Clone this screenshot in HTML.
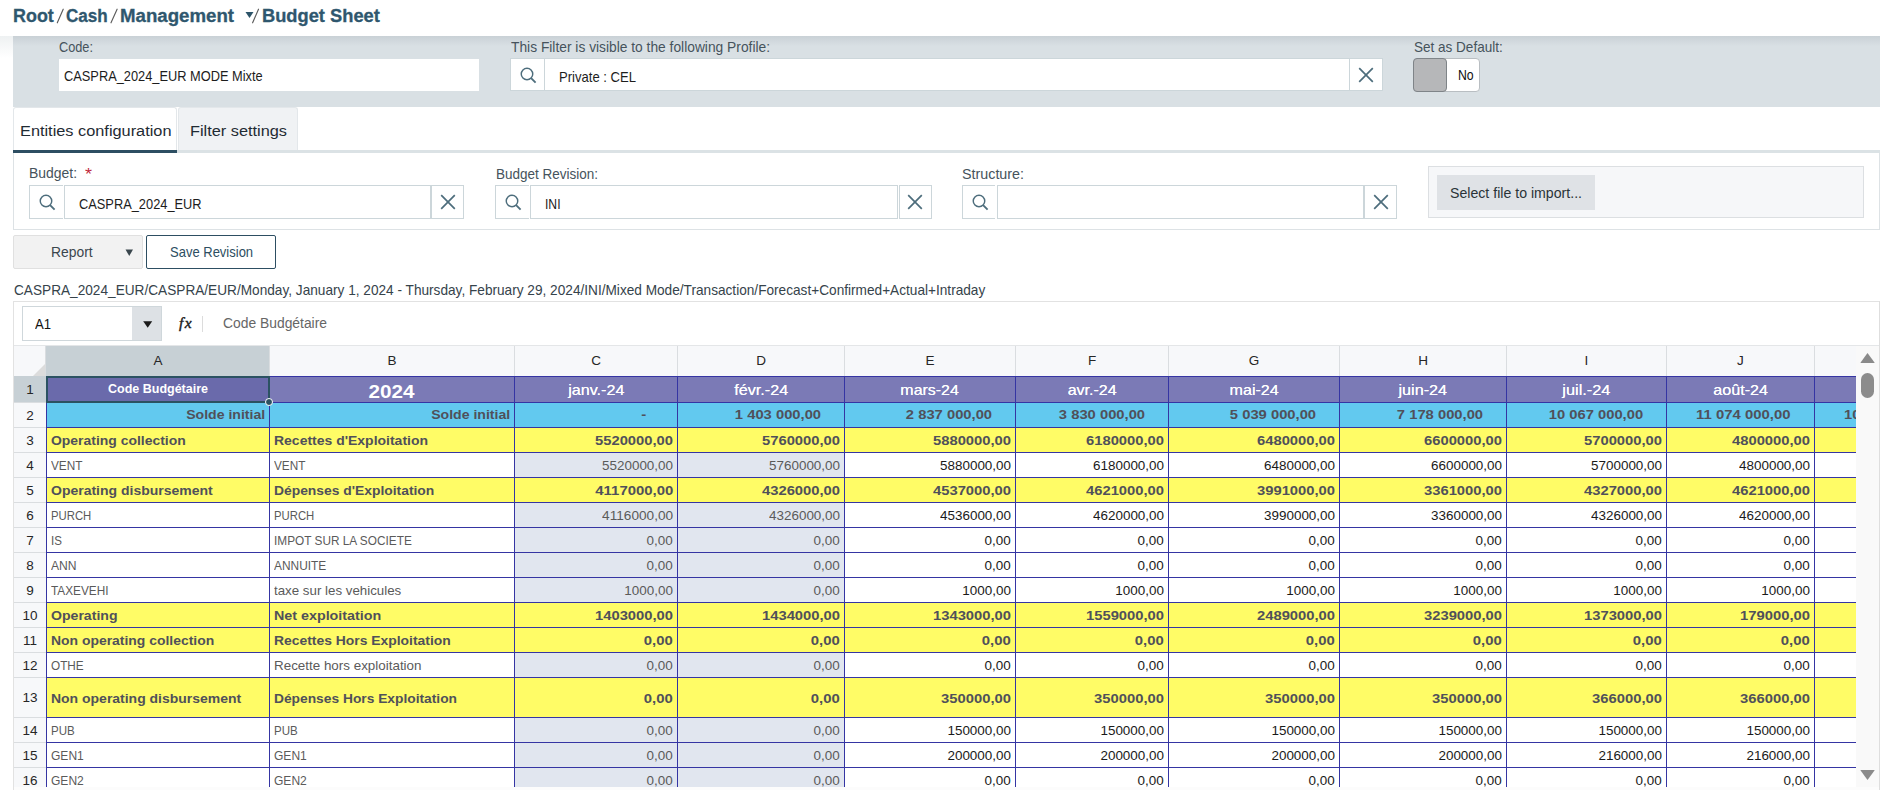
<!DOCTYPE html>
<html><head><meta charset="utf-8"><style>
html,body{margin:0;padding:0;width:1887px;height:790px;overflow:hidden;background:#fff;}
body{position:relative;font-family:"Liberation Sans",sans-serif;}
.a{position:absolute;}
.t{white-space:nowrap;}
</style></head><body>
<div class="a t" style="left:13.20px;top:6.50px;font-size:18px;line-height:18px;color:#2f576e;font-weight:bold;transform:scaleX(0.9955);transform-origin:left;-webkit-text-stroke:0.3px #2f576e;">Root</div>
<div class="a t" style="left:66.20px;top:6.50px;font-size:18px;line-height:18px;color:#2f576e;font-weight:bold;transform:scaleX(0.9497);transform-origin:left;-webkit-text-stroke:0.3px #2f576e;">Cash</div>
<div class="a t" style="left:120.20px;top:6.50px;font-size:18px;line-height:18px;color:#2f576e;font-weight:bold;transform:scaleX(1.0362);transform-origin:left;-webkit-text-stroke:0.3px #2f576e;">Management</div>
<div class="a t" style="left:261.60px;top:6.50px;font-size:18px;line-height:18px;color:#2f576e;font-weight:bold;transform:scaleX(1.0154);transform-origin:left;-webkit-text-stroke:0.3px #2f576e;">Budget Sheet</div>
<svg class="a" style="left:0;top:0" width="300" height="30"><path d="M57.3 22.8 L63.2 9.2" stroke="#5c5c5c" stroke-width="1.15" stroke-linecap="round"/></svg>
<svg class="a" style="left:0;top:0" width="300" height="30"><path d="M111.0 22.8 L117.1 9.2" stroke="#5c5c5c" stroke-width="1.15" stroke-linecap="round"/></svg>
<svg class="a" style="left:0;top:0" width="300" height="30"><path d="M252.6 22.8 L258.5 9.2" stroke="#5c5c5c" stroke-width="1.15" stroke-linecap="round"/></svg>
<svg class="a" style="left:245px;top:11px" width="9" height="9"><path d="M0.5 1 L8.5 1 L4.5 7 Z" fill="#2d5469"/></svg>
<div class="a" style="left:13px;top:36px;width:1867px;height:71px;background:linear-gradient(#c9d1d6 0px,#d9e0e4 10px,#d9e0e4 100%)"></div>
<div class="a" style="left:0px;top:36px;width:13px;height:22px;background:linear-gradient(#eef1f2 0px,#ffffff 22px)"></div>
<div class="a t" style="left:59.00px;top:39.78px;font-size:14.5px;line-height:14.5px;color:#46535c;transform:scaleX(0.8787);transform-origin:left;">Code:</div>
<div class="a" style="left:59px;top:59px;width:420px;height:32px;background:#ffffff;"></div>
<div class="a t" style="left:64.40px;top:68.05px;font-size:15px;line-height:15px;color:#1d1d1d;transform:scaleX(0.8543);transform-origin:left;">CASPRA_2024_EUR MODE Mixte</div>
<div class="a t" style="left:510.90px;top:39.88px;font-size:14.5px;line-height:14.5px;color:#46535c;transform:scaleX(0.9509);transform-origin:left;">This Filter is visible to the following Profile:</div>
<div class="a t" style="left:1413.80px;top:40.17px;font-size:14.5px;line-height:14.5px;color:#46535c;transform:scaleX(0.9326);transform-origin:left;">Set as Default:</div>
<div class="a" style="left:510px;top:58px;width:872.5px;height:33px;background:#fff;border:1px solid #ccd6da;box-sizing:border-box;"></div>
<div class="a" style="left:543.5px;top:58px;width:1.0px;height:33px;background:#ccd6da;"></div>
<div class="a" style="left:1348.5px;top:58px;width:1.0px;height:33px;background:#ccd6da;"></div>
<svg class="a" style="left:518.95px;top:65.9px" width="18" height="18" viewBox="0 0 18 18"><circle cx="8" cy="8" r="5.75" fill="none" stroke="#4d6d7c" stroke-width="1.45"/><path d="M12.1 12.1 L16.6 16.6" stroke="#4d6d7c" stroke-width="1.9" stroke-linecap="butt"/></svg>
<svg class="a" style="left:1357.85px;top:66.5px" width="16" height="16" viewBox="0 0 16 16"><path d="M1.2 1.2 L14.8 14.8 M14.8 1.2 L1.2 14.8" stroke="#4d6d7c" stroke-width="1.7"/></svg>
<div class="a t" style="left:559.30px;top:69.45px;font-size:15px;line-height:15px;color:#1d1d1d;transform:scaleX(0.8714);transform-origin:left;">Private : CEL</div>
<div class="a" style="left:1413px;top:58px;width:67px;height:34px;background:#fff;border:1px solid #b9bec2;border-radius:4px;box-sizing:border-box"></div>
<div class="a" style="left:1413px;top:58px;width:34px;height:34px;background:#b6b7b9;border:1px solid #7f8488;border-radius:4px;box-sizing:border-box"></div>
<div class="a t" style="left:1458.00px;top:67.35px;font-size:15px;line-height:15px;color:#111;transform:scaleX(0.8188);transform-origin:left;">No</div>
<div class="a" style="left:13px;top:150px;width:1867px;height:3px;background:#dbe2e5;"></div>
<div class="a" style="left:13px;top:107px;width:163.5px;height:43px;background:#ffffff;border:1px solid #e3e7ea;border-bottom:none;box-sizing:border-box;border-radius:3px 3px 0 0;"></div>
<div class="a" style="left:13px;top:150px;width:163.5px;height:3px;background:#2d4e62;"></div>
<div class="a" style="left:178.4px;top:107px;width:119.20000000000002px;height:43px;background:#f0f2f4;border:1px solid #e3e7ea;border-bottom:none;box-sizing:border-box;border-radius:3px 3px 0 0;"></div>
<div class="a t" style="left:19.50px;top:122.80px;font-size:15.3px;line-height:15.3px;color:#1f2b33;transform:scaleX(1.0666);transform-origin:left;">Entities configuration</div>
<div class="a t" style="left:190.00px;top:122.80px;font-size:15.3px;line-height:15.3px;color:#1f2b33;transform:scaleX(1.0662);transform-origin:left;">Filter settings</div>
<div class="a" style="left:13px;top:153px;width:1867px;height:77px;background:#ffffff;border:1px solid #dde2e5;border-top:none;box-sizing:border-box;"></div>
<div class="a t" style="left:29.40px;top:166.48px;font-size:14.5px;line-height:14.5px;color:#46535c;transform:scaleX(0.9603);transform-origin:left;">Budget:</div>
<div class="a t" style="left:84.50px;top:167.40px;font-size:16px;line-height:16px;color:#c0283c;transform:scaleX(1.1242);transform-origin:left;">*</div>
<div class="a" style="left:29px;top:185px;width:33.5px;height:33.5px;background:#fff;border:1px solid #ccd6da;border-right:none;box-sizing:border-box;"></div>
<div class="a" style="left:64.0px;top:185px;width:367.2px;height:33.5px;background:#fff;border:1px solid #ccd6da;box-sizing:border-box;"></div>
<div class="a" style="left:431.2px;top:185px;width:33.30000000000001px;height:33.5px;background:#fff;border:1px solid #ccd6da;box-sizing:border-box;"></div>
<svg class="a" style="left:37.95px;top:193.15px" width="18" height="18" viewBox="0 0 18 18"><circle cx="8" cy="8" r="5.75" fill="none" stroke="#4d6d7c" stroke-width="1.45"/><path d="M12.1 12.1 L16.6 16.6" stroke="#4d6d7c" stroke-width="1.9" stroke-linecap="butt"/></svg>
<svg class="a" style="left:439.85px;top:193.75px" width="16" height="16" viewBox="0 0 16 16"><path d="M1.2 1.2 L14.8 14.8 M14.8 1.2 L1.2 14.8" stroke="#4d6d7c" stroke-width="1.7"/></svg>
<div class="a t" style="left:78.50px;top:195.65px;font-size:15px;line-height:15px;color:#1d1d1d;transform:scaleX(0.8549);transform-origin:left;">CASPRA_2024_EUR</div>
<div class="a t" style="left:496.20px;top:166.58px;font-size:14.5px;line-height:14.5px;color:#46535c;transform:scaleX(0.9305);transform-origin:left;">Budget Revision:</div>
<div class="a" style="left:495.4px;top:185px;width:33.5px;height:33.5px;background:#fff;border:1px solid #ccd6da;border-right:none;box-sizing:border-box;"></div>
<div class="a" style="left:530.4px;top:185px;width:368.1px;height:33.5px;background:#fff;border:1px solid #ccd6da;box-sizing:border-box;"></div>
<div class="a" style="left:898.5px;top:185px;width:33.299999999999955px;height:33.5px;background:#fff;border:1px solid #ccd6da;box-sizing:border-box;"></div>
<svg class="a" style="left:504.35px;top:193.15px" width="18" height="18" viewBox="0 0 18 18"><circle cx="8" cy="8" r="5.75" fill="none" stroke="#4d6d7c" stroke-width="1.45"/><path d="M12.1 12.1 L16.6 16.6" stroke="#4d6d7c" stroke-width="1.9" stroke-linecap="butt"/></svg>
<svg class="a" style="left:907.15px;top:193.75px" width="16" height="16" viewBox="0 0 16 16"><path d="M1.2 1.2 L14.8 14.8 M14.8 1.2 L1.2 14.8" stroke="#4d6d7c" stroke-width="1.7"/></svg>
<div class="a t" style="left:545.20px;top:196.15px;font-size:15px;line-height:15px;color:#1d1d1d;transform:scaleX(0.8087);transform-origin:left;">INI</div>
<div class="a t" style="left:961.70px;top:166.58px;font-size:14.5px;line-height:14.5px;color:#46535c;transform:scaleX(0.9864);transform-origin:left;">Structure:</div>
<div class="a" style="left:961.8px;top:185px;width:33.5px;height:33.5px;background:#fff;border:1px solid #ccd6da;border-right:none;box-sizing:border-box;"></div>
<div class="a" style="left:996.8px;top:185px;width:367.4000000000001px;height:33.5px;background:#fff;border:1px solid #ccd6da;box-sizing:border-box;"></div>
<div class="a" style="left:1364.2px;top:185px;width:33.299999999999955px;height:33.5px;background:#fff;border:1px solid #ccd6da;box-sizing:border-box;"></div>
<svg class="a" style="left:970.75px;top:193.15px" width="18" height="18" viewBox="0 0 18 18"><circle cx="8" cy="8" r="5.75" fill="none" stroke="#4d6d7c" stroke-width="1.45"/><path d="M12.1 12.1 L16.6 16.6" stroke="#4d6d7c" stroke-width="1.9" stroke-linecap="butt"/></svg>
<svg class="a" style="left:1372.85px;top:193.75px" width="16" height="16" viewBox="0 0 16 16"><path d="M1.2 1.2 L14.8 14.8 M14.8 1.2 L1.2 14.8" stroke="#4d6d7c" stroke-width="1.7"/></svg>
<div class="a" style="left:1428.3px;top:166.2px;width:435.4000000000001px;height:52.10000000000002px;background:#f6f7f9;border:1px solid #dcdfe2;box-sizing:border-box;"></div>
<div class="a" style="left:1437px;top:175px;width:158px;height:35px;background:#dfe2e6;"></div>
<div class="a t" style="left:1450.00px;top:186.08px;font-size:14.5px;line-height:14.5px;color:#2a3338;transform:scaleX(0.9750);transform-origin:left;">Select file to import...</div>
<div class="a" style="left:13.3px;top:235.3px;width:129.3px;height:33.6px;background:#f2f2f2;border:1px solid #e0e0e0;border-radius:2px;box-sizing:border-box"></div>
<div class="a t" style="left:51.00px;top:244.78px;font-size:14.5px;line-height:14.5px;color:#3a464d;transform:scaleX(0.9558);transform-origin:left;">Report</div>
<svg class="a" style="left:125px;top:249px" width="9" height="8"><path d="M0.5 0.6 L8 0.6 L4.25 7 Z" fill="#3a464d"/></svg>
<div class="a" style="left:146.3px;top:235.3px;width:129.4px;height:33.6px;background:#fff;border:1.5px solid #2d4e62;border-radius:2px;box-sizing:border-box"></div>
<div class="a t" style="left:169.50px;top:244.78px;font-size:14.5px;line-height:14.5px;color:#2d4e62;transform:scaleX(0.8966);transform-origin:left;">Save Revision</div>
<div class="a t" style="left:13.50px;top:282.68px;font-size:14.5px;line-height:14.5px;color:#36434b;transform:scaleX(0.9409);transform-origin:left;">CASPRA_2024_EUR/CASPRA/EUR/Monday, January 1, 2024 - Thursday, February 29, 2024/INI/Mixed Mode/Transaction/Forecast+Confirmed+Actual+Intraday</div>
<div class="a" style="left:13px;top:301px;width:1867px;height:499px;background:#ffffff;border:1px solid #e2e2e2;box-sizing:border-box;"></div>
<div class="a" style="left:22.4px;top:306.4px;width:139.2px;height:34.200000000000045px;background:#ffffff;border:1px solid #cfd7db;box-sizing:border-box;"></div>
<div class="a" style="left:132px;top:307.4px;width:28.599999999999994px;height:32.200000000000045px;background:#dde1e5;"></div>
<svg class="a" style="left:142.6px;top:320.6px" width="10" height="8"><path d="M0.2 0.2 L9.2 0.2 L4.7 6.7 Z" fill="#1a1a1a"/></svg>
<div class="a t" style="left:35.00px;top:317.20px;font-size:14px;line-height:14px;color:#111;transform:scaleX(0.9344);transform-origin:left;">A1</div>
<div class="a t" style="left:179px;top:315px;font-family:'Liberation Serif';font-style:italic;font-size:15.5px;line-height:15.5px;color:#1a1a1a;letter-spacing:1.5px;-webkit-text-stroke:0.4px #1a1a1a">fx</div>
<div class="a" style="left:202px;top:316.4px;width:1px;height:15.600000000000023px;background:#dcdcdc;"></div>
<div class="a t" style="left:223.40px;top:316.40px;font-size:14px;line-height:14px;color:#666;transform:scaleX(0.9898);transform-origin:left;">Code Budgétaire</div>
<div class="a" style="left:14px;top:345px;width:1842px;height:31px;background:#f7f8fa;"></div>
<div class="a" style="left:14px;top:376px;width:32px;height:411px;background:#f7f8fa;"></div>
<div class="a" style="left:46px;top:345px;width:223px;height:31px;background:#c7d0d5;"></div>
<div class="a" style="left:14px;top:376px;width:32px;height:26px;background:#c7d0d5;"></div>
<svg class="a" style="left:33px;top:363px" width="13" height="13"><path d="M13 0 L13 13 L0 13 Z" fill="#dcdcdc"/></svg>
<div class="a" style="left:269px;top:345px;width:1px;height:31px;background:#dadde0;"></div>
<div class="a" style="left:514px;top:345px;width:1px;height:31px;background:#dadde0;"></div>
<div class="a" style="left:677px;top:345px;width:1px;height:31px;background:#dadde0;"></div>
<div class="a" style="left:844px;top:345px;width:1px;height:31px;background:#dadde0;"></div>
<div class="a" style="left:1015px;top:345px;width:1px;height:31px;background:#dadde0;"></div>
<div class="a" style="left:1168px;top:345px;width:1px;height:31px;background:#dadde0;"></div>
<div class="a" style="left:1339px;top:345px;width:1px;height:31px;background:#dadde0;"></div>
<div class="a" style="left:1506px;top:345px;width:1px;height:31px;background:#dadde0;"></div>
<div class="a" style="left:1666px;top:345px;width:1px;height:31px;background:#dadde0;"></div>
<div class="a" style="left:1814px;top:345px;width:1px;height:31px;background:#dadde0;"></div>
<div class="a" style="left:1856px;top:345px;width:1px;height:31px;background:#dadde0;"></div>
<div class="a" style="left:14px;top:402px;width:32px;height:1px;background:#dadde0;"></div>
<div class="a" style="left:14px;top:427px;width:32px;height:1px;background:#dadde0;"></div>
<div class="a" style="left:14px;top:452px;width:32px;height:1px;background:#dadde0;"></div>
<div class="a" style="left:14px;top:477px;width:32px;height:1px;background:#dadde0;"></div>
<div class="a" style="left:14px;top:502px;width:32px;height:1px;background:#dadde0;"></div>
<div class="a" style="left:14px;top:527px;width:32px;height:1px;background:#dadde0;"></div>
<div class="a" style="left:14px;top:552px;width:32px;height:1px;background:#dadde0;"></div>
<div class="a" style="left:14px;top:577px;width:32px;height:1px;background:#dadde0;"></div>
<div class="a" style="left:14px;top:602px;width:32px;height:1px;background:#dadde0;"></div>
<div class="a" style="left:14px;top:627px;width:32px;height:1px;background:#dadde0;"></div>
<div class="a" style="left:14px;top:652px;width:32px;height:1px;background:#dadde0;"></div>
<div class="a" style="left:14px;top:677px;width:32px;height:1px;background:#dadde0;"></div>
<div class="a" style="left:14px;top:717px;width:32px;height:1px;background:#dadde0;"></div>
<div class="a" style="left:14px;top:742px;width:32px;height:1px;background:#dadde0;"></div>
<div class="a" style="left:14px;top:767px;width:32px;height:1px;background:#dadde0;"></div>
<div class="a" style="left:14px;top:787px;width:32px;height:1px;background:#dadde0;"></div>
<div class="a" style="left:45px;top:345px;width:1px;height:31px;background:#dadde0;"></div>
<div class="a" style="left:14px;top:345px;width:1865px;height:1px;background:#e4e6e8;"></div>
<div class="a t" style="left:153.50px;top:354.22px;font-size:13.5px;line-height:13.5px;color:#262626;">A</div>
<div class="a t" style="left:387.50px;top:354.22px;font-size:13.5px;line-height:13.5px;color:#262626;">B</div>
<div class="a t" style="left:591.13px;top:354.22px;font-size:13.5px;line-height:13.5px;color:#262626;">C</div>
<div class="a t" style="left:756.13px;top:354.22px;font-size:13.5px;line-height:13.5px;color:#262626;">D</div>
<div class="a t" style="left:925.50px;top:354.22px;font-size:13.5px;line-height:13.5px;color:#262626;">E</div>
<div class="a t" style="left:1087.88px;top:354.22px;font-size:13.5px;line-height:13.5px;color:#262626;">F</div>
<div class="a t" style="left:1248.75px;top:354.22px;font-size:13.5px;line-height:13.5px;color:#262626;">G</div>
<div class="a t" style="left:1418.13px;top:354.22px;font-size:13.5px;line-height:13.5px;color:#262626;">H</div>
<div class="a t" style="left:1584.62px;top:354.22px;font-size:13.5px;line-height:13.5px;color:#262626;">I</div>
<div class="a t" style="left:1737.12px;top:354.22px;font-size:13.5px;line-height:13.5px;color:#262626;">J</div>
<div class="a t" style="left:26.25px;top:382.92px;font-size:13.5px;line-height:13.5px;color:#262626;">1</div>
<div class="a t" style="left:26.25px;top:408.82px;font-size:13.5px;line-height:13.5px;color:#262626;">2</div>
<div class="a t" style="left:26.25px;top:433.82px;font-size:13.5px;line-height:13.5px;color:#262626;">3</div>
<div class="a t" style="left:26.25px;top:458.82px;font-size:13.5px;line-height:13.5px;color:#262626;">4</div>
<div class="a t" style="left:26.25px;top:483.82px;font-size:13.5px;line-height:13.5px;color:#262626;">5</div>
<div class="a t" style="left:26.25px;top:508.82px;font-size:13.5px;line-height:13.5px;color:#262626;">6</div>
<div class="a t" style="left:26.25px;top:533.82px;font-size:13.5px;line-height:13.5px;color:#262626;">7</div>
<div class="a t" style="left:26.25px;top:558.82px;font-size:13.5px;line-height:13.5px;color:#262626;">8</div>
<div class="a t" style="left:26.25px;top:583.82px;font-size:13.5px;line-height:13.5px;color:#262626;">9</div>
<div class="a t" style="left:22.49px;top:608.82px;font-size:13.5px;line-height:13.5px;color:#262626;">10</div>
<div class="a t" style="left:22.99px;top:633.82px;font-size:13.5px;line-height:13.5px;color:#262626;">11</div>
<div class="a t" style="left:22.49px;top:658.82px;font-size:13.5px;line-height:13.5px;color:#262626;">12</div>
<div class="a t" style="left:22.49px;top:691.32px;font-size:13.5px;line-height:13.5px;color:#262626;">13</div>
<div class="a t" style="left:22.49px;top:723.82px;font-size:13.5px;line-height:13.5px;color:#262626;">14</div>
<div class="a t" style="left:22.49px;top:748.82px;font-size:13.5px;line-height:13.5px;color:#262626;">15</div>
<div class="a t" style="left:22.49px;top:773.73px;font-size:13.5px;line-height:13.5px;color:#262626;">16</div>
<div class="a" style="left:0;top:0;width:1856px;height:787px;overflow:hidden">
<div class="a" style="left:46px;top:376px;width:223px;height:26px;background:#7b7ab6;"></div>
<div class="a" style="left:269px;top:376px;width:245px;height:26px;background:#7b7ab6;"></div>
<div class="a" style="left:514px;top:376px;width:163px;height:26px;background:#7b7ab6;"></div>
<div class="a" style="left:677px;top:376px;width:167px;height:26px;background:#7b7ab6;"></div>
<div class="a" style="left:844px;top:376px;width:171px;height:26px;background:#7b7ab6;"></div>
<div class="a" style="left:1015px;top:376px;width:153px;height:26px;background:#7b7ab6;"></div>
<div class="a" style="left:1168px;top:376px;width:171px;height:26px;background:#7b7ab6;"></div>
<div class="a" style="left:1339px;top:376px;width:167px;height:26px;background:#7b7ab6;"></div>
<div class="a" style="left:1506px;top:376px;width:160px;height:26px;background:#7b7ab6;"></div>
<div class="a" style="left:1666px;top:376px;width:148px;height:26px;background:#7b7ab6;"></div>
<div class="a" style="left:1814px;top:376px;width:42px;height:26px;background:#7b7ab6;"></div>
<div class="a" style="left:46px;top:402px;width:223px;height:25px;background:#62c9ef;"></div>
<div class="a" style="left:269px;top:402px;width:245px;height:25px;background:#62c9ef;"></div>
<div class="a" style="left:514px;top:402px;width:163px;height:25px;background:#62c9ef;"></div>
<div class="a" style="left:677px;top:402px;width:167px;height:25px;background:#62c9ef;"></div>
<div class="a" style="left:844px;top:402px;width:171px;height:25px;background:#62c9ef;"></div>
<div class="a" style="left:1015px;top:402px;width:153px;height:25px;background:#62c9ef;"></div>
<div class="a" style="left:1168px;top:402px;width:171px;height:25px;background:#62c9ef;"></div>
<div class="a" style="left:1339px;top:402px;width:167px;height:25px;background:#62c9ef;"></div>
<div class="a" style="left:1506px;top:402px;width:160px;height:25px;background:#62c9ef;"></div>
<div class="a" style="left:1666px;top:402px;width:148px;height:25px;background:#62c9ef;"></div>
<div class="a" style="left:1814px;top:402px;width:42px;height:25px;background:#62c9ef;"></div>
<div class="a" style="left:46px;top:427px;width:223px;height:25px;background:#fffc66;"></div>
<div class="a" style="left:269px;top:427px;width:245px;height:25px;background:#fffc66;"></div>
<div class="a" style="left:514px;top:427px;width:163px;height:25px;background:#fffc66;"></div>
<div class="a" style="left:677px;top:427px;width:167px;height:25px;background:#fffc66;"></div>
<div class="a" style="left:844px;top:427px;width:171px;height:25px;background:#fffc66;"></div>
<div class="a" style="left:1015px;top:427px;width:153px;height:25px;background:#fffc66;"></div>
<div class="a" style="left:1168px;top:427px;width:171px;height:25px;background:#fffc66;"></div>
<div class="a" style="left:1339px;top:427px;width:167px;height:25px;background:#fffc66;"></div>
<div class="a" style="left:1506px;top:427px;width:160px;height:25px;background:#fffc66;"></div>
<div class="a" style="left:1666px;top:427px;width:148px;height:25px;background:#fffc66;"></div>
<div class="a" style="left:1814px;top:427px;width:42px;height:25px;background:#fffc66;"></div>
<div class="a" style="left:46px;top:452px;width:223px;height:25px;background:#ffffff;"></div>
<div class="a" style="left:269px;top:452px;width:245px;height:25px;background:#ffffff;"></div>
<div class="a" style="left:514px;top:452px;width:163px;height:25px;background:#e1e6ef;"></div>
<div class="a" style="left:677px;top:452px;width:167px;height:25px;background:#e1e6ef;"></div>
<div class="a" style="left:844px;top:452px;width:171px;height:25px;background:#ffffff;"></div>
<div class="a" style="left:1015px;top:452px;width:153px;height:25px;background:#ffffff;"></div>
<div class="a" style="left:1168px;top:452px;width:171px;height:25px;background:#ffffff;"></div>
<div class="a" style="left:1339px;top:452px;width:167px;height:25px;background:#ffffff;"></div>
<div class="a" style="left:1506px;top:452px;width:160px;height:25px;background:#ffffff;"></div>
<div class="a" style="left:1666px;top:452px;width:148px;height:25px;background:#ffffff;"></div>
<div class="a" style="left:1814px;top:452px;width:42px;height:25px;background:#ffffff;"></div>
<div class="a" style="left:46px;top:477px;width:223px;height:25px;background:#fffc66;"></div>
<div class="a" style="left:269px;top:477px;width:245px;height:25px;background:#fffc66;"></div>
<div class="a" style="left:514px;top:477px;width:163px;height:25px;background:#fffc66;"></div>
<div class="a" style="left:677px;top:477px;width:167px;height:25px;background:#fffc66;"></div>
<div class="a" style="left:844px;top:477px;width:171px;height:25px;background:#fffc66;"></div>
<div class="a" style="left:1015px;top:477px;width:153px;height:25px;background:#fffc66;"></div>
<div class="a" style="left:1168px;top:477px;width:171px;height:25px;background:#fffc66;"></div>
<div class="a" style="left:1339px;top:477px;width:167px;height:25px;background:#fffc66;"></div>
<div class="a" style="left:1506px;top:477px;width:160px;height:25px;background:#fffc66;"></div>
<div class="a" style="left:1666px;top:477px;width:148px;height:25px;background:#fffc66;"></div>
<div class="a" style="left:1814px;top:477px;width:42px;height:25px;background:#fffc66;"></div>
<div class="a" style="left:46px;top:502px;width:223px;height:25px;background:#ffffff;"></div>
<div class="a" style="left:269px;top:502px;width:245px;height:25px;background:#ffffff;"></div>
<div class="a" style="left:514px;top:502px;width:163px;height:25px;background:#e1e6ef;"></div>
<div class="a" style="left:677px;top:502px;width:167px;height:25px;background:#e1e6ef;"></div>
<div class="a" style="left:844px;top:502px;width:171px;height:25px;background:#ffffff;"></div>
<div class="a" style="left:1015px;top:502px;width:153px;height:25px;background:#ffffff;"></div>
<div class="a" style="left:1168px;top:502px;width:171px;height:25px;background:#ffffff;"></div>
<div class="a" style="left:1339px;top:502px;width:167px;height:25px;background:#ffffff;"></div>
<div class="a" style="left:1506px;top:502px;width:160px;height:25px;background:#ffffff;"></div>
<div class="a" style="left:1666px;top:502px;width:148px;height:25px;background:#ffffff;"></div>
<div class="a" style="left:1814px;top:502px;width:42px;height:25px;background:#ffffff;"></div>
<div class="a" style="left:46px;top:527px;width:223px;height:25px;background:#ffffff;"></div>
<div class="a" style="left:269px;top:527px;width:245px;height:25px;background:#ffffff;"></div>
<div class="a" style="left:514px;top:527px;width:163px;height:25px;background:#e1e6ef;"></div>
<div class="a" style="left:677px;top:527px;width:167px;height:25px;background:#e1e6ef;"></div>
<div class="a" style="left:844px;top:527px;width:171px;height:25px;background:#ffffff;"></div>
<div class="a" style="left:1015px;top:527px;width:153px;height:25px;background:#ffffff;"></div>
<div class="a" style="left:1168px;top:527px;width:171px;height:25px;background:#ffffff;"></div>
<div class="a" style="left:1339px;top:527px;width:167px;height:25px;background:#ffffff;"></div>
<div class="a" style="left:1506px;top:527px;width:160px;height:25px;background:#ffffff;"></div>
<div class="a" style="left:1666px;top:527px;width:148px;height:25px;background:#ffffff;"></div>
<div class="a" style="left:1814px;top:527px;width:42px;height:25px;background:#ffffff;"></div>
<div class="a" style="left:46px;top:552px;width:223px;height:25px;background:#ffffff;"></div>
<div class="a" style="left:269px;top:552px;width:245px;height:25px;background:#ffffff;"></div>
<div class="a" style="left:514px;top:552px;width:163px;height:25px;background:#e1e6ef;"></div>
<div class="a" style="left:677px;top:552px;width:167px;height:25px;background:#e1e6ef;"></div>
<div class="a" style="left:844px;top:552px;width:171px;height:25px;background:#ffffff;"></div>
<div class="a" style="left:1015px;top:552px;width:153px;height:25px;background:#ffffff;"></div>
<div class="a" style="left:1168px;top:552px;width:171px;height:25px;background:#ffffff;"></div>
<div class="a" style="left:1339px;top:552px;width:167px;height:25px;background:#ffffff;"></div>
<div class="a" style="left:1506px;top:552px;width:160px;height:25px;background:#ffffff;"></div>
<div class="a" style="left:1666px;top:552px;width:148px;height:25px;background:#ffffff;"></div>
<div class="a" style="left:1814px;top:552px;width:42px;height:25px;background:#ffffff;"></div>
<div class="a" style="left:46px;top:577px;width:223px;height:25px;background:#ffffff;"></div>
<div class="a" style="left:269px;top:577px;width:245px;height:25px;background:#ffffff;"></div>
<div class="a" style="left:514px;top:577px;width:163px;height:25px;background:#e1e6ef;"></div>
<div class="a" style="left:677px;top:577px;width:167px;height:25px;background:#e1e6ef;"></div>
<div class="a" style="left:844px;top:577px;width:171px;height:25px;background:#ffffff;"></div>
<div class="a" style="left:1015px;top:577px;width:153px;height:25px;background:#ffffff;"></div>
<div class="a" style="left:1168px;top:577px;width:171px;height:25px;background:#ffffff;"></div>
<div class="a" style="left:1339px;top:577px;width:167px;height:25px;background:#ffffff;"></div>
<div class="a" style="left:1506px;top:577px;width:160px;height:25px;background:#ffffff;"></div>
<div class="a" style="left:1666px;top:577px;width:148px;height:25px;background:#ffffff;"></div>
<div class="a" style="left:1814px;top:577px;width:42px;height:25px;background:#ffffff;"></div>
<div class="a" style="left:46px;top:602px;width:223px;height:25px;background:#fffc66;"></div>
<div class="a" style="left:269px;top:602px;width:245px;height:25px;background:#fffc66;"></div>
<div class="a" style="left:514px;top:602px;width:163px;height:25px;background:#fffc66;"></div>
<div class="a" style="left:677px;top:602px;width:167px;height:25px;background:#fffc66;"></div>
<div class="a" style="left:844px;top:602px;width:171px;height:25px;background:#fffc66;"></div>
<div class="a" style="left:1015px;top:602px;width:153px;height:25px;background:#fffc66;"></div>
<div class="a" style="left:1168px;top:602px;width:171px;height:25px;background:#fffc66;"></div>
<div class="a" style="left:1339px;top:602px;width:167px;height:25px;background:#fffc66;"></div>
<div class="a" style="left:1506px;top:602px;width:160px;height:25px;background:#fffc66;"></div>
<div class="a" style="left:1666px;top:602px;width:148px;height:25px;background:#fffc66;"></div>
<div class="a" style="left:1814px;top:602px;width:42px;height:25px;background:#fffc66;"></div>
<div class="a" style="left:46px;top:627px;width:223px;height:25px;background:#fffc66;"></div>
<div class="a" style="left:269px;top:627px;width:245px;height:25px;background:#fffc66;"></div>
<div class="a" style="left:514px;top:627px;width:163px;height:25px;background:#fffc66;"></div>
<div class="a" style="left:677px;top:627px;width:167px;height:25px;background:#fffc66;"></div>
<div class="a" style="left:844px;top:627px;width:171px;height:25px;background:#fffc66;"></div>
<div class="a" style="left:1015px;top:627px;width:153px;height:25px;background:#fffc66;"></div>
<div class="a" style="left:1168px;top:627px;width:171px;height:25px;background:#fffc66;"></div>
<div class="a" style="left:1339px;top:627px;width:167px;height:25px;background:#fffc66;"></div>
<div class="a" style="left:1506px;top:627px;width:160px;height:25px;background:#fffc66;"></div>
<div class="a" style="left:1666px;top:627px;width:148px;height:25px;background:#fffc66;"></div>
<div class="a" style="left:1814px;top:627px;width:42px;height:25px;background:#fffc66;"></div>
<div class="a" style="left:46px;top:652px;width:223px;height:25px;background:#ffffff;"></div>
<div class="a" style="left:269px;top:652px;width:245px;height:25px;background:#ffffff;"></div>
<div class="a" style="left:514px;top:652px;width:163px;height:25px;background:#e1e6ef;"></div>
<div class="a" style="left:677px;top:652px;width:167px;height:25px;background:#e1e6ef;"></div>
<div class="a" style="left:844px;top:652px;width:171px;height:25px;background:#ffffff;"></div>
<div class="a" style="left:1015px;top:652px;width:153px;height:25px;background:#ffffff;"></div>
<div class="a" style="left:1168px;top:652px;width:171px;height:25px;background:#ffffff;"></div>
<div class="a" style="left:1339px;top:652px;width:167px;height:25px;background:#ffffff;"></div>
<div class="a" style="left:1506px;top:652px;width:160px;height:25px;background:#ffffff;"></div>
<div class="a" style="left:1666px;top:652px;width:148px;height:25px;background:#ffffff;"></div>
<div class="a" style="left:1814px;top:652px;width:42px;height:25px;background:#ffffff;"></div>
<div class="a" style="left:46px;top:677px;width:223px;height:40px;background:#fffc66;"></div>
<div class="a" style="left:269px;top:677px;width:245px;height:40px;background:#fffc66;"></div>
<div class="a" style="left:514px;top:677px;width:163px;height:40px;background:#fffc66;"></div>
<div class="a" style="left:677px;top:677px;width:167px;height:40px;background:#fffc66;"></div>
<div class="a" style="left:844px;top:677px;width:171px;height:40px;background:#fffc66;"></div>
<div class="a" style="left:1015px;top:677px;width:153px;height:40px;background:#fffc66;"></div>
<div class="a" style="left:1168px;top:677px;width:171px;height:40px;background:#fffc66;"></div>
<div class="a" style="left:1339px;top:677px;width:167px;height:40px;background:#fffc66;"></div>
<div class="a" style="left:1506px;top:677px;width:160px;height:40px;background:#fffc66;"></div>
<div class="a" style="left:1666px;top:677px;width:148px;height:40px;background:#fffc66;"></div>
<div class="a" style="left:1814px;top:677px;width:42px;height:40px;background:#fffc66;"></div>
<div class="a" style="left:46px;top:717px;width:223px;height:25px;background:#ffffff;"></div>
<div class="a" style="left:269px;top:717px;width:245px;height:25px;background:#ffffff;"></div>
<div class="a" style="left:514px;top:717px;width:163px;height:25px;background:#e1e6ef;"></div>
<div class="a" style="left:677px;top:717px;width:167px;height:25px;background:#e1e6ef;"></div>
<div class="a" style="left:844px;top:717px;width:171px;height:25px;background:#ffffff;"></div>
<div class="a" style="left:1015px;top:717px;width:153px;height:25px;background:#ffffff;"></div>
<div class="a" style="left:1168px;top:717px;width:171px;height:25px;background:#ffffff;"></div>
<div class="a" style="left:1339px;top:717px;width:167px;height:25px;background:#ffffff;"></div>
<div class="a" style="left:1506px;top:717px;width:160px;height:25px;background:#ffffff;"></div>
<div class="a" style="left:1666px;top:717px;width:148px;height:25px;background:#ffffff;"></div>
<div class="a" style="left:1814px;top:717px;width:42px;height:25px;background:#ffffff;"></div>
<div class="a" style="left:46px;top:742px;width:223px;height:25px;background:#ffffff;"></div>
<div class="a" style="left:269px;top:742px;width:245px;height:25px;background:#ffffff;"></div>
<div class="a" style="left:514px;top:742px;width:163px;height:25px;background:#e1e6ef;"></div>
<div class="a" style="left:677px;top:742px;width:167px;height:25px;background:#e1e6ef;"></div>
<div class="a" style="left:844px;top:742px;width:171px;height:25px;background:#ffffff;"></div>
<div class="a" style="left:1015px;top:742px;width:153px;height:25px;background:#ffffff;"></div>
<div class="a" style="left:1168px;top:742px;width:171px;height:25px;background:#ffffff;"></div>
<div class="a" style="left:1339px;top:742px;width:167px;height:25px;background:#ffffff;"></div>
<div class="a" style="left:1506px;top:742px;width:160px;height:25px;background:#ffffff;"></div>
<div class="a" style="left:1666px;top:742px;width:148px;height:25px;background:#ffffff;"></div>
<div class="a" style="left:1814px;top:742px;width:42px;height:25px;background:#ffffff;"></div>
<div class="a" style="left:46px;top:767px;width:223px;height:20px;background:#ffffff;"></div>
<div class="a" style="left:269px;top:767px;width:245px;height:20px;background:#ffffff;"></div>
<div class="a" style="left:514px;top:767px;width:163px;height:20px;background:#e1e6ef;"></div>
<div class="a" style="left:677px;top:767px;width:167px;height:20px;background:#e1e6ef;"></div>
<div class="a" style="left:844px;top:767px;width:171px;height:20px;background:#ffffff;"></div>
<div class="a" style="left:1015px;top:767px;width:153px;height:20px;background:#ffffff;"></div>
<div class="a" style="left:1168px;top:767px;width:171px;height:20px;background:#ffffff;"></div>
<div class="a" style="left:1339px;top:767px;width:167px;height:20px;background:#ffffff;"></div>
<div class="a" style="left:1506px;top:767px;width:160px;height:20px;background:#ffffff;"></div>
<div class="a" style="left:1666px;top:767px;width:148px;height:20px;background:#ffffff;"></div>
<div class="a" style="left:1814px;top:767px;width:42px;height:20px;background:#ffffff;"></div>
<div class="a" style="left:46px;top:376px;width:223px;height:26px;background:#6a6aab;"></div>
<div class="a" style="left:46px;top:376px;width:1px;height:411px;background:#3535a3;"></div>
<div class="a" style="left:269px;top:376px;width:1px;height:411px;background:#3535a3;"></div>
<div class="a" style="left:514px;top:376px;width:1px;height:411px;background:#3535a3;"></div>
<div class="a" style="left:677px;top:376px;width:1px;height:411px;background:#3535a3;"></div>
<div class="a" style="left:844px;top:376px;width:1px;height:411px;background:#3535a3;"></div>
<div class="a" style="left:1015px;top:376px;width:1px;height:411px;background:#3535a3;"></div>
<div class="a" style="left:1168px;top:376px;width:1px;height:411px;background:#3535a3;"></div>
<div class="a" style="left:1339px;top:376px;width:1px;height:411px;background:#3535a3;"></div>
<div class="a" style="left:1506px;top:376px;width:1px;height:411px;background:#3535a3;"></div>
<div class="a" style="left:1666px;top:376px;width:1px;height:411px;background:#3535a3;"></div>
<div class="a" style="left:1814px;top:376px;width:1px;height:411px;background:#3535a3;"></div>
<div class="a" style="left:1856px;top:376px;width:1px;height:411px;background:#3535a3;"></div>
<div class="a" style="left:46px;top:376px;width:1810px;height:1px;background:#3535a3;"></div>
<div class="a" style="left:46px;top:402px;width:1810px;height:1px;background:#3535a3;"></div>
<div class="a" style="left:46px;top:427px;width:1810px;height:1px;background:#3535a3;"></div>
<div class="a" style="left:46px;top:452px;width:1810px;height:1px;background:#3535a3;"></div>
<div class="a" style="left:46px;top:477px;width:1810px;height:1px;background:#3535a3;"></div>
<div class="a" style="left:46px;top:502px;width:1810px;height:1px;background:#3535a3;"></div>
<div class="a" style="left:46px;top:527px;width:1810px;height:1px;background:#3535a3;"></div>
<div class="a" style="left:46px;top:552px;width:1810px;height:1px;background:#3535a3;"></div>
<div class="a" style="left:46px;top:577px;width:1810px;height:1px;background:#3535a3;"></div>
<div class="a" style="left:46px;top:602px;width:1810px;height:1px;background:#3535a3;"></div>
<div class="a" style="left:46px;top:627px;width:1810px;height:1px;background:#3535a3;"></div>
<div class="a" style="left:46px;top:652px;width:1810px;height:1px;background:#3535a3;"></div>
<div class="a" style="left:46px;top:677px;width:1810px;height:1px;background:#3535a3;"></div>
<div class="a" style="left:46px;top:717px;width:1810px;height:1px;background:#3535a3;"></div>
<div class="a" style="left:46px;top:742px;width:1810px;height:1px;background:#3535a3;"></div>
<div class="a" style="left:46px;top:767px;width:1810px;height:1px;background:#3535a3;"></div>
<div class="a t" style="left:110.49px;top:382.70px;font-size:12px;line-height:12px;color:#ffffff;font-weight:bold;transform:scaleX(1.0415);transform-origin:center;">Code Budgétaire</div>
<div class="a t" style="left:370.92px;top:383.27px;font-size:18.5px;line-height:18.5px;color:#ffffff;font-weight:bold;transform:scaleX(1.1177);transform-origin:center;">2024</div>
<div class="a t" style="left:570.75px;top:382.88px;font-size:14.5px;line-height:14.5px;color:#ffffff;transform:scaleX(1.1126);transform-origin:center;text-shadow:0 0 0.4px #fff;">janv.-24</div>
<div class="a t" style="left:736.82px;top:382.88px;font-size:14.5px;line-height:14.5px;color:#ffffff;transform:scaleX(1.1155);transform-origin:center;text-shadow:0 0 0.4px #fff;">févr.-24</div>
<div class="a t" style="left:903.41px;top:382.88px;font-size:14.5px;line-height:14.5px;color:#ffffff;transform:scaleX(1.0998);transform-origin:center;text-shadow:0 0 0.4px #fff;">mars-24</div>
<div class="a t" style="left:1069.84px;top:382.88px;font-size:14.5px;line-height:14.5px;color:#ffffff;transform:scaleX(1.1042);transform-origin:center;text-shadow:0 0 0.4px #fff;">avr.-24</div>
<div class="a t" style="left:1231.84px;top:382.88px;font-size:14.5px;line-height:14.5px;color:#ffffff;transform:scaleX(1.1117);transform-origin:center;text-shadow:0 0 0.4px #fff;">mai-24</div>
<div class="a t" style="left:1401.24px;top:382.88px;font-size:14.5px;line-height:14.5px;color:#ffffff;transform:scaleX(1.1185);transform-origin:center;text-shadow:0 0 0.4px #fff;">juin-24</div>
<div class="a t" style="left:1565.14px;top:382.88px;font-size:14.5px;line-height:14.5px;color:#ffffff;transform:scaleX(1.1273);transform-origin:center;text-shadow:0 0 0.4px #fff;">juil.-24</div>
<div class="a t" style="left:1715.91px;top:382.88px;font-size:14.5px;line-height:14.5px;color:#ffffff;transform:scaleX(1.1124);transform-origin:center;text-shadow:0 0 0.4px #fff;">août-24</div>
<div class="a t" style="left:194.13px;top:409.00px;font-size:12.7px;line-height:12.7px;color:#50505a;font-weight:bold;transform:scaleX(1.1102);transform-origin:right;">Solde initial</div>
<div class="a t" style="left:439.13px;top:409.00px;font-size:12.7px;line-height:12.7px;color:#50505a;font-weight:bold;transform:scaleX(1.1102);transform-origin:right;">Solde initial</div>
<div class="a t" style="left:641.77px;top:409.00px;font-size:12.7px;line-height:12.7px;color:#50505a;font-weight:bold;transform:scaleX(1.1822);transform-origin:right;">-</div>
<div class="a t" style="left:746.85px;top:409.00px;font-size:12.7px;line-height:12.7px;color:#50505a;font-weight:bold;transform:scaleX(1.1638);transform-origin:right;">1 403 000,00</div>
<div class="a t" style="left:917.85px;top:409.00px;font-size:12.7px;line-height:12.7px;color:#50505a;font-weight:bold;transform:scaleX(1.1638);transform-origin:right;">2 837 000,00</div>
<div class="a t" style="left:1070.85px;top:409.00px;font-size:12.7px;line-height:12.7px;color:#50505a;font-weight:bold;transform:scaleX(1.1638);transform-origin:right;">3 830 000,00</div>
<div class="a t" style="left:1241.85px;top:409.00px;font-size:12.7px;line-height:12.7px;color:#50505a;font-weight:bold;transform:scaleX(1.1638);transform-origin:right;">5 039 000,00</div>
<div class="a t" style="left:1408.85px;top:409.00px;font-size:12.7px;line-height:12.7px;color:#50505a;font-weight:bold;transform:scaleX(1.1638);transform-origin:right;">7 178 000,00</div>
<div class="a t" style="left:1561.78px;top:409.00px;font-size:12.7px;line-height:12.7px;color:#50505a;font-weight:bold;transform:scaleX(1.1633);transform-origin:right;">10 067 000,00</div>
<div class="a t" style="left:1710.48px;top:409.00px;font-size:12.7px;line-height:12.7px;color:#50505a;font-weight:bold;transform:scaleX(1.1734);transform-origin:right;">11 074 000,00</div>
<div class="a t" style="left:1843.90px;top:409.00px;font-size:12.7px;line-height:12.7px;color:#50505a;font-weight:bold;transform:scaleX(1.1585);transform-origin:left;">10</div>
<div class="a t" style="left:50.90px;top:434.70px;font-size:12.7px;line-height:12.7px;color:#50505a;font-weight:bold;transform:scaleX(1.0981);transform-origin:left;">Operating collection</div>
<div class="a t" style="left:273.90px;top:434.70px;font-size:12.7px;line-height:12.7px;color:#50505a;font-weight:bold;transform:scaleX(1.1017);transform-origin:left;">Recettes d&#x27;Exploitation</div>
<div class="a t" style="left:606.00px;top:434.70px;font-size:12.7px;line-height:12.7px;color:#50505a;font-weight:bold;transform:scaleX(1.1641);transform-origin:right;">5520000,00</div>
<div class="a t" style="left:773.00px;top:434.70px;font-size:12.7px;line-height:12.7px;color:#50505a;font-weight:bold;transform:scaleX(1.1641);transform-origin:right;">5760000,00</div>
<div class="a t" style="left:944.00px;top:434.70px;font-size:12.7px;line-height:12.7px;color:#50505a;font-weight:bold;transform:scaleX(1.1641);transform-origin:right;">5880000,00</div>
<div class="a t" style="left:1097.00px;top:434.70px;font-size:12.7px;line-height:12.7px;color:#50505a;font-weight:bold;transform:scaleX(1.1641);transform-origin:right;">6180000,00</div>
<div class="a t" style="left:1268.00px;top:434.70px;font-size:12.7px;line-height:12.7px;color:#50505a;font-weight:bold;transform:scaleX(1.1641);transform-origin:right;">6480000,00</div>
<div class="a t" style="left:1435.00px;top:434.70px;font-size:12.7px;line-height:12.7px;color:#50505a;font-weight:bold;transform:scaleX(1.1641);transform-origin:right;">6600000,00</div>
<div class="a t" style="left:1595.00px;top:434.70px;font-size:12.7px;line-height:12.7px;color:#50505a;font-weight:bold;transform:scaleX(1.1641);transform-origin:right;">5700000,00</div>
<div class="a t" style="left:1743.00px;top:434.70px;font-size:12.7px;line-height:12.7px;color:#50505a;font-weight:bold;transform:scaleX(1.1641);transform-origin:right;">4800000,00</div>
<div class="a t" style="left:50.90px;top:459.70px;font-size:12.7px;line-height:12.7px;color:#5a5a5a;transform:scaleX(0.9287);transform-origin:left;">VENT</div>
<div class="a t" style="left:273.90px;top:459.70px;font-size:12.7px;line-height:12.7px;color:#5a5a5a;transform:scaleX(0.9287);transform-origin:left;">VENT</div>
<div class="a t" style="left:606.00px;top:459.70px;font-size:12.7px;line-height:12.7px;color:#5a5a5a;transform:scaleX(1.0593);transform-origin:right;">5520000,00</div>
<div class="a t" style="left:773.00px;top:459.70px;font-size:12.7px;line-height:12.7px;color:#5a5a5a;transform:scaleX(1.0593);transform-origin:right;">5760000,00</div>
<div class="a t" style="left:944.00px;top:459.70px;font-size:12.7px;line-height:12.7px;color:#1a1a1a;transform:scaleX(1.0593);transform-origin:right;">5880000,00</div>
<div class="a t" style="left:1097.00px;top:459.70px;font-size:12.7px;line-height:12.7px;color:#1a1a1a;transform:scaleX(1.0593);transform-origin:right;">6180000,00</div>
<div class="a t" style="left:1268.00px;top:459.70px;font-size:12.7px;line-height:12.7px;color:#1a1a1a;transform:scaleX(1.0593);transform-origin:right;">6480000,00</div>
<div class="a t" style="left:1435.00px;top:459.70px;font-size:12.7px;line-height:12.7px;color:#1a1a1a;transform:scaleX(1.0593);transform-origin:right;">6600000,00</div>
<div class="a t" style="left:1595.00px;top:459.70px;font-size:12.7px;line-height:12.7px;color:#1a1a1a;transform:scaleX(1.0593);transform-origin:right;">5700000,00</div>
<div class="a t" style="left:1743.00px;top:459.70px;font-size:12.7px;line-height:12.7px;color:#1a1a1a;transform:scaleX(1.0593);transform-origin:right;">4800000,00</div>
<div class="a t" style="left:50.90px;top:484.70px;font-size:12.7px;line-height:12.7px;color:#50505a;font-weight:bold;transform:scaleX(1.1030);transform-origin:left;">Operating disbursement</div>
<div class="a t" style="left:273.90px;top:484.70px;font-size:12.7px;line-height:12.7px;color:#50505a;font-weight:bold;transform:scaleX(1.0915);transform-origin:left;">Dépenses d&#x27;Exploitation</div>
<div class="a t" style="left:606.70px;top:484.70px;font-size:12.7px;line-height:12.7px;color:#50505a;font-weight:bold;transform:scaleX(1.1764);transform-origin:right;">4117000,00</div>
<div class="a t" style="left:773.00px;top:484.70px;font-size:12.7px;line-height:12.7px;color:#50505a;font-weight:bold;transform:scaleX(1.1641);transform-origin:right;">4326000,00</div>
<div class="a t" style="left:944.00px;top:484.70px;font-size:12.7px;line-height:12.7px;color:#50505a;font-weight:bold;transform:scaleX(1.1641);transform-origin:right;">4537000,00</div>
<div class="a t" style="left:1097.00px;top:484.70px;font-size:12.7px;line-height:12.7px;color:#50505a;font-weight:bold;transform:scaleX(1.1641);transform-origin:right;">4621000,00</div>
<div class="a t" style="left:1268.00px;top:484.70px;font-size:12.7px;line-height:12.7px;color:#50505a;font-weight:bold;transform:scaleX(1.1641);transform-origin:right;">3991000,00</div>
<div class="a t" style="left:1435.00px;top:484.70px;font-size:12.7px;line-height:12.7px;color:#50505a;font-weight:bold;transform:scaleX(1.1641);transform-origin:right;">3361000,00</div>
<div class="a t" style="left:1595.00px;top:484.70px;font-size:12.7px;line-height:12.7px;color:#50505a;font-weight:bold;transform:scaleX(1.1641);transform-origin:right;">4327000,00</div>
<div class="a t" style="left:1743.00px;top:484.70px;font-size:12.7px;line-height:12.7px;color:#50505a;font-weight:bold;transform:scaleX(1.1641);transform-origin:right;">4621000,00</div>
<div class="a t" style="left:50.90px;top:509.70px;font-size:12.7px;line-height:12.7px;color:#5a5a5a;transform:scaleX(0.8933);transform-origin:left;">PURCH</div>
<div class="a t" style="left:273.90px;top:509.70px;font-size:12.7px;line-height:12.7px;color:#5a5a5a;transform:scaleX(0.8933);transform-origin:left;">PURCH</div>
<div class="a t" style="left:606.95px;top:509.70px;font-size:12.7px;line-height:12.7px;color:#5a5a5a;transform:scaleX(1.0744);transform-origin:right;">4116000,00</div>
<div class="a t" style="left:773.00px;top:509.70px;font-size:12.7px;line-height:12.7px;color:#5a5a5a;transform:scaleX(1.0593);transform-origin:right;">4326000,00</div>
<div class="a t" style="left:944.00px;top:509.70px;font-size:12.7px;line-height:12.7px;color:#1a1a1a;transform:scaleX(1.0593);transform-origin:right;">4536000,00</div>
<div class="a t" style="left:1097.00px;top:509.70px;font-size:12.7px;line-height:12.7px;color:#1a1a1a;transform:scaleX(1.0593);transform-origin:right;">4620000,00</div>
<div class="a t" style="left:1268.00px;top:509.70px;font-size:12.7px;line-height:12.7px;color:#1a1a1a;transform:scaleX(1.0593);transform-origin:right;">3990000,00</div>
<div class="a t" style="left:1435.00px;top:509.70px;font-size:12.7px;line-height:12.7px;color:#1a1a1a;transform:scaleX(1.0593);transform-origin:right;">3360000,00</div>
<div class="a t" style="left:1595.00px;top:509.70px;font-size:12.7px;line-height:12.7px;color:#1a1a1a;transform:scaleX(1.0593);transform-origin:right;">4326000,00</div>
<div class="a t" style="left:1743.00px;top:509.70px;font-size:12.7px;line-height:12.7px;color:#1a1a1a;transform:scaleX(1.0593);transform-origin:right;">4620000,00</div>
<div class="a t" style="left:50.90px;top:534.71px;font-size:12.7px;line-height:12.7px;color:#5a5a5a;transform:scaleX(0.9111);transform-origin:left;">IS</div>
<div class="a t" style="left:273.90px;top:534.71px;font-size:12.7px;line-height:12.7px;color:#5a5a5a;transform:scaleX(0.9321);transform-origin:left;">IMPOT SUR LA SOCIETE</div>
<div class="a t" style="left:648.38px;top:534.71px;font-size:12.7px;line-height:12.7px;color:#5a5a5a;transform:scaleX(1.0593);transform-origin:right;">0,00</div>
<div class="a t" style="left:815.38px;top:534.71px;font-size:12.7px;line-height:12.7px;color:#5a5a5a;transform:scaleX(1.0593);transform-origin:right;">0,00</div>
<div class="a t" style="left:986.38px;top:534.71px;font-size:12.7px;line-height:12.7px;color:#1a1a1a;transform:scaleX(1.0593);transform-origin:right;">0,00</div>
<div class="a t" style="left:1139.38px;top:534.71px;font-size:12.7px;line-height:12.7px;color:#1a1a1a;transform:scaleX(1.0593);transform-origin:right;">0,00</div>
<div class="a t" style="left:1310.38px;top:534.71px;font-size:12.7px;line-height:12.7px;color:#1a1a1a;transform:scaleX(1.0593);transform-origin:right;">0,00</div>
<div class="a t" style="left:1477.38px;top:534.71px;font-size:12.7px;line-height:12.7px;color:#1a1a1a;transform:scaleX(1.0593);transform-origin:right;">0,00</div>
<div class="a t" style="left:1637.38px;top:534.71px;font-size:12.7px;line-height:12.7px;color:#1a1a1a;transform:scaleX(1.0593);transform-origin:right;">0,00</div>
<div class="a t" style="left:1785.38px;top:534.71px;font-size:12.7px;line-height:12.7px;color:#1a1a1a;transform:scaleX(1.0593);transform-origin:right;">0,00</div>
<div class="a t" style="left:50.90px;top:559.71px;font-size:12.7px;line-height:12.7px;color:#5a5a5a;transform:scaleX(0.9562);transform-origin:left;">ANN</div>
<div class="a t" style="left:273.90px;top:559.71px;font-size:12.7px;line-height:12.7px;color:#5a5a5a;transform:scaleX(0.9388);transform-origin:left;">ANNUITE</div>
<div class="a t" style="left:648.38px;top:559.71px;font-size:12.7px;line-height:12.7px;color:#5a5a5a;transform:scaleX(1.0593);transform-origin:right;">0,00</div>
<div class="a t" style="left:815.38px;top:559.71px;font-size:12.7px;line-height:12.7px;color:#5a5a5a;transform:scaleX(1.0593);transform-origin:right;">0,00</div>
<div class="a t" style="left:986.38px;top:559.71px;font-size:12.7px;line-height:12.7px;color:#1a1a1a;transform:scaleX(1.0593);transform-origin:right;">0,00</div>
<div class="a t" style="left:1139.38px;top:559.71px;font-size:12.7px;line-height:12.7px;color:#1a1a1a;transform:scaleX(1.0593);transform-origin:right;">0,00</div>
<div class="a t" style="left:1310.38px;top:559.71px;font-size:12.7px;line-height:12.7px;color:#1a1a1a;transform:scaleX(1.0593);transform-origin:right;">0,00</div>
<div class="a t" style="left:1477.38px;top:559.71px;font-size:12.7px;line-height:12.7px;color:#1a1a1a;transform:scaleX(1.0593);transform-origin:right;">0,00</div>
<div class="a t" style="left:1637.38px;top:559.71px;font-size:12.7px;line-height:12.7px;color:#1a1a1a;transform:scaleX(1.0593);transform-origin:right;">0,00</div>
<div class="a t" style="left:1785.38px;top:559.71px;font-size:12.7px;line-height:12.7px;color:#1a1a1a;transform:scaleX(1.0593);transform-origin:right;">0,00</div>
<div class="a t" style="left:50.90px;top:584.71px;font-size:12.7px;line-height:12.7px;color:#5a5a5a;transform:scaleX(0.9308);transform-origin:left;">TAXEVEHI</div>
<div class="a t" style="left:273.90px;top:584.71px;font-size:12.7px;line-height:12.7px;color:#5a5a5a;transform:scaleX(1.0491);transform-origin:left;">taxe sur les vehicules</div>
<div class="a t" style="left:627.19px;top:584.71px;font-size:12.7px;line-height:12.7px;color:#5a5a5a;transform:scaleX(1.0593);transform-origin:right;">1000,00</div>
<div class="a t" style="left:815.38px;top:584.71px;font-size:12.7px;line-height:12.7px;color:#5a5a5a;transform:scaleX(1.0593);transform-origin:right;">0,00</div>
<div class="a t" style="left:965.19px;top:584.71px;font-size:12.7px;line-height:12.7px;color:#1a1a1a;transform:scaleX(1.0593);transform-origin:right;">1000,00</div>
<div class="a t" style="left:1118.19px;top:584.71px;font-size:12.7px;line-height:12.7px;color:#1a1a1a;transform:scaleX(1.0593);transform-origin:right;">1000,00</div>
<div class="a t" style="left:1289.19px;top:584.71px;font-size:12.7px;line-height:12.7px;color:#1a1a1a;transform:scaleX(1.0593);transform-origin:right;">1000,00</div>
<div class="a t" style="left:1456.19px;top:584.71px;font-size:12.7px;line-height:12.7px;color:#1a1a1a;transform:scaleX(1.0593);transform-origin:right;">1000,00</div>
<div class="a t" style="left:1616.19px;top:584.71px;font-size:12.7px;line-height:12.7px;color:#1a1a1a;transform:scaleX(1.0593);transform-origin:right;">1000,00</div>
<div class="a t" style="left:1764.19px;top:584.71px;font-size:12.7px;line-height:12.7px;color:#1a1a1a;transform:scaleX(1.0593);transform-origin:right;">1000,00</div>
<div class="a t" style="left:50.90px;top:609.71px;font-size:12.7px;line-height:12.7px;color:#50505a;font-weight:bold;transform:scaleX(1.1099);transform-origin:left;">Operating</div>
<div class="a t" style="left:273.90px;top:609.71px;font-size:12.7px;line-height:12.7px;color:#50505a;font-weight:bold;transform:scaleX(1.1266);transform-origin:left;">Net exploitation</div>
<div class="a t" style="left:606.00px;top:609.71px;font-size:12.7px;line-height:12.7px;color:#50505a;font-weight:bold;transform:scaleX(1.1641);transform-origin:right;">1403000,00</div>
<div class="a t" style="left:773.00px;top:609.71px;font-size:12.7px;line-height:12.7px;color:#50505a;font-weight:bold;transform:scaleX(1.1641);transform-origin:right;">1434000,00</div>
<div class="a t" style="left:944.00px;top:609.71px;font-size:12.7px;line-height:12.7px;color:#50505a;font-weight:bold;transform:scaleX(1.1641);transform-origin:right;">1343000,00</div>
<div class="a t" style="left:1097.00px;top:609.71px;font-size:12.7px;line-height:12.7px;color:#50505a;font-weight:bold;transform:scaleX(1.1641);transform-origin:right;">1559000,00</div>
<div class="a t" style="left:1268.00px;top:609.71px;font-size:12.7px;line-height:12.7px;color:#50505a;font-weight:bold;transform:scaleX(1.1641);transform-origin:right;">2489000,00</div>
<div class="a t" style="left:1435.00px;top:609.71px;font-size:12.7px;line-height:12.7px;color:#50505a;font-weight:bold;transform:scaleX(1.1641);transform-origin:right;">3239000,00</div>
<div class="a t" style="left:1595.00px;top:609.71px;font-size:12.7px;line-height:12.7px;color:#50505a;font-weight:bold;transform:scaleX(1.1641);transform-origin:right;">1373000,00</div>
<div class="a t" style="left:1750.07px;top:609.71px;font-size:12.7px;line-height:12.7px;color:#50505a;font-weight:bold;transform:scaleX(1.1648);transform-origin:right;">179000,00</div>
<div class="a t" style="left:50.90px;top:634.71px;font-size:12.7px;line-height:12.7px;color:#50505a;font-weight:bold;transform:scaleX(1.0969);transform-origin:left;">Non operating collection</div>
<div class="a t" style="left:273.90px;top:634.71px;font-size:12.7px;line-height:12.7px;color:#50505a;font-weight:bold;transform:scaleX(1.0949);transform-origin:left;">Recettes Hors Exploitation</div>
<div class="a t" style="left:648.38px;top:634.71px;font-size:12.7px;line-height:12.7px;color:#50505a;font-weight:bold;transform:scaleX(1.1739);transform-origin:right;">0,00</div>
<div class="a t" style="left:815.38px;top:634.71px;font-size:12.7px;line-height:12.7px;color:#50505a;font-weight:bold;transform:scaleX(1.1739);transform-origin:right;">0,00</div>
<div class="a t" style="left:986.38px;top:634.71px;font-size:12.7px;line-height:12.7px;color:#50505a;font-weight:bold;transform:scaleX(1.1739);transform-origin:right;">0,00</div>
<div class="a t" style="left:1139.38px;top:634.71px;font-size:12.7px;line-height:12.7px;color:#50505a;font-weight:bold;transform:scaleX(1.1739);transform-origin:right;">0,00</div>
<div class="a t" style="left:1310.38px;top:634.71px;font-size:12.7px;line-height:12.7px;color:#50505a;font-weight:bold;transform:scaleX(1.1739);transform-origin:right;">0,00</div>
<div class="a t" style="left:1477.38px;top:634.71px;font-size:12.7px;line-height:12.7px;color:#50505a;font-weight:bold;transform:scaleX(1.1739);transform-origin:right;">0,00</div>
<div class="a t" style="left:1637.38px;top:634.71px;font-size:12.7px;line-height:12.7px;color:#50505a;font-weight:bold;transform:scaleX(1.1739);transform-origin:right;">0,00</div>
<div class="a t" style="left:1785.38px;top:634.71px;font-size:12.7px;line-height:12.7px;color:#50505a;font-weight:bold;transform:scaleX(1.1739);transform-origin:right;">0,00</div>
<div class="a t" style="left:50.90px;top:659.71px;font-size:12.7px;line-height:12.7px;color:#5a5a5a;transform:scaleX(0.9273);transform-origin:left;">OTHE</div>
<div class="a t" style="left:273.90px;top:659.71px;font-size:12.7px;line-height:12.7px;color:#5a5a5a;transform:scaleX(1.0563);transform-origin:left;">Recette hors exploitation</div>
<div class="a t" style="left:648.38px;top:659.71px;font-size:12.7px;line-height:12.7px;color:#5a5a5a;transform:scaleX(1.0593);transform-origin:right;">0,00</div>
<div class="a t" style="left:815.38px;top:659.71px;font-size:12.7px;line-height:12.7px;color:#5a5a5a;transform:scaleX(1.0593);transform-origin:right;">0,00</div>
<div class="a t" style="left:986.38px;top:659.71px;font-size:12.7px;line-height:12.7px;color:#1a1a1a;transform:scaleX(1.0593);transform-origin:right;">0,00</div>
<div class="a t" style="left:1139.38px;top:659.71px;font-size:12.7px;line-height:12.7px;color:#1a1a1a;transform:scaleX(1.0593);transform-origin:right;">0,00</div>
<div class="a t" style="left:1310.38px;top:659.71px;font-size:12.7px;line-height:12.7px;color:#1a1a1a;transform:scaleX(1.0593);transform-origin:right;">0,00</div>
<div class="a t" style="left:1477.38px;top:659.71px;font-size:12.7px;line-height:12.7px;color:#1a1a1a;transform:scaleX(1.0593);transform-origin:right;">0,00</div>
<div class="a t" style="left:1637.38px;top:659.71px;font-size:12.7px;line-height:12.7px;color:#1a1a1a;transform:scaleX(1.0593);transform-origin:right;">0,00</div>
<div class="a t" style="left:1785.38px;top:659.71px;font-size:12.7px;line-height:12.7px;color:#1a1a1a;transform:scaleX(1.0593);transform-origin:right;">0,00</div>
<div class="a t" style="left:50.90px;top:693.00px;font-size:12.7px;line-height:12.7px;color:#50505a;font-weight:bold;transform:scaleX(1.1012);transform-origin:left;">Non operating disbursement</div>
<div class="a t" style="left:273.90px;top:693.00px;font-size:12.7px;line-height:12.7px;color:#50505a;font-weight:bold;transform:scaleX(1.0863);transform-origin:left;">Dépenses Hors Exploitation</div>
<div class="a t" style="left:648.38px;top:693.00px;font-size:12.7px;line-height:12.7px;color:#50505a;font-weight:bold;transform:scaleX(1.1739);transform-origin:right;">0,00</div>
<div class="a t" style="left:815.38px;top:693.00px;font-size:12.7px;line-height:12.7px;color:#50505a;font-weight:bold;transform:scaleX(1.1739);transform-origin:right;">0,00</div>
<div class="a t" style="left:951.07px;top:693.00px;font-size:12.7px;line-height:12.7px;color:#50505a;font-weight:bold;transform:scaleX(1.1648);transform-origin:right;">350000,00</div>
<div class="a t" style="left:1104.07px;top:693.00px;font-size:12.7px;line-height:12.7px;color:#50505a;font-weight:bold;transform:scaleX(1.1648);transform-origin:right;">350000,00</div>
<div class="a t" style="left:1275.07px;top:693.00px;font-size:12.7px;line-height:12.7px;color:#50505a;font-weight:bold;transform:scaleX(1.1648);transform-origin:right;">350000,00</div>
<div class="a t" style="left:1442.07px;top:693.00px;font-size:12.7px;line-height:12.7px;color:#50505a;font-weight:bold;transform:scaleX(1.1648);transform-origin:right;">350000,00</div>
<div class="a t" style="left:1602.07px;top:693.00px;font-size:12.7px;line-height:12.7px;color:#50505a;font-weight:bold;transform:scaleX(1.1648);transform-origin:right;">366000,00</div>
<div class="a t" style="left:1750.07px;top:693.00px;font-size:12.7px;line-height:12.7px;color:#50505a;font-weight:bold;transform:scaleX(1.1648);transform-origin:right;">366000,00</div>
<div class="a t" style="left:50.90px;top:724.71px;font-size:12.7px;line-height:12.7px;color:#5a5a5a;transform:scaleX(0.9101);transform-origin:left;">PUB</div>
<div class="a t" style="left:273.90px;top:724.71px;font-size:12.7px;line-height:12.7px;color:#5a5a5a;transform:scaleX(0.9101);transform-origin:left;">PUB</div>
<div class="a t" style="left:648.38px;top:724.71px;font-size:12.7px;line-height:12.7px;color:#5a5a5a;transform:scaleX(1.0593);transform-origin:right;">0,00</div>
<div class="a t" style="left:815.38px;top:724.71px;font-size:12.7px;line-height:12.7px;color:#5a5a5a;transform:scaleX(1.0593);transform-origin:right;">0,00</div>
<div class="a t" style="left:951.07px;top:724.71px;font-size:12.7px;line-height:12.7px;color:#1a1a1a;transform:scaleX(1.0593);transform-origin:right;">150000,00</div>
<div class="a t" style="left:1104.07px;top:724.71px;font-size:12.7px;line-height:12.7px;color:#1a1a1a;transform:scaleX(1.0593);transform-origin:right;">150000,00</div>
<div class="a t" style="left:1275.07px;top:724.71px;font-size:12.7px;line-height:12.7px;color:#1a1a1a;transform:scaleX(1.0593);transform-origin:right;">150000,00</div>
<div class="a t" style="left:1442.07px;top:724.71px;font-size:12.7px;line-height:12.7px;color:#1a1a1a;transform:scaleX(1.0593);transform-origin:right;">150000,00</div>
<div class="a t" style="left:1602.07px;top:724.71px;font-size:12.7px;line-height:12.7px;color:#1a1a1a;transform:scaleX(1.0593);transform-origin:right;">150000,00</div>
<div class="a t" style="left:1750.07px;top:724.71px;font-size:12.7px;line-height:12.7px;color:#1a1a1a;transform:scaleX(1.0593);transform-origin:right;">150000,00</div>
<div class="a t" style="left:50.90px;top:749.71px;font-size:12.7px;line-height:12.7px;color:#5a5a5a;transform:scaleX(0.9491);transform-origin:left;">GEN1</div>
<div class="a t" style="left:273.90px;top:749.71px;font-size:12.7px;line-height:12.7px;color:#5a5a5a;transform:scaleX(0.9491);transform-origin:left;">GEN1</div>
<div class="a t" style="left:648.38px;top:749.71px;font-size:12.7px;line-height:12.7px;color:#5a5a5a;transform:scaleX(1.0593);transform-origin:right;">0,00</div>
<div class="a t" style="left:815.38px;top:749.71px;font-size:12.7px;line-height:12.7px;color:#5a5a5a;transform:scaleX(1.0593);transform-origin:right;">0,00</div>
<div class="a t" style="left:951.07px;top:749.71px;font-size:12.7px;line-height:12.7px;color:#1a1a1a;transform:scaleX(1.0593);transform-origin:right;">200000,00</div>
<div class="a t" style="left:1104.07px;top:749.71px;font-size:12.7px;line-height:12.7px;color:#1a1a1a;transform:scaleX(1.0593);transform-origin:right;">200000,00</div>
<div class="a t" style="left:1275.07px;top:749.71px;font-size:12.7px;line-height:12.7px;color:#1a1a1a;transform:scaleX(1.0593);transform-origin:right;">200000,00</div>
<div class="a t" style="left:1442.07px;top:749.71px;font-size:12.7px;line-height:12.7px;color:#1a1a1a;transform:scaleX(1.0593);transform-origin:right;">200000,00</div>
<div class="a t" style="left:1602.07px;top:749.71px;font-size:12.7px;line-height:12.7px;color:#1a1a1a;transform:scaleX(1.0593);transform-origin:right;">216000,00</div>
<div class="a t" style="left:1750.07px;top:749.71px;font-size:12.7px;line-height:12.7px;color:#1a1a1a;transform:scaleX(1.0593);transform-origin:right;">216000,00</div>
<div class="a t" style="left:50.90px;top:775.00px;font-size:12.7px;line-height:12.7px;color:#5a5a5a;transform:scaleX(0.9491);transform-origin:left;">GEN2</div>
<div class="a t" style="left:273.90px;top:775.00px;font-size:12.7px;line-height:12.7px;color:#5a5a5a;transform:scaleX(0.9491);transform-origin:left;">GEN2</div>
<div class="a t" style="left:648.38px;top:775.00px;font-size:12.7px;line-height:12.7px;color:#5a5a5a;transform:scaleX(1.0593);transform-origin:right;">0,00</div>
<div class="a t" style="left:815.38px;top:775.00px;font-size:12.7px;line-height:12.7px;color:#5a5a5a;transform:scaleX(1.0593);transform-origin:right;">0,00</div>
<div class="a t" style="left:986.38px;top:775.00px;font-size:12.7px;line-height:12.7px;color:#1a1a1a;transform:scaleX(1.0593);transform-origin:right;">0,00</div>
<div class="a t" style="left:1139.38px;top:775.00px;font-size:12.7px;line-height:12.7px;color:#1a1a1a;transform:scaleX(1.0593);transform-origin:right;">0,00</div>
<div class="a t" style="left:1310.38px;top:775.00px;font-size:12.7px;line-height:12.7px;color:#1a1a1a;transform:scaleX(1.0593);transform-origin:right;">0,00</div>
<div class="a t" style="left:1477.38px;top:775.00px;font-size:12.7px;line-height:12.7px;color:#1a1a1a;transform:scaleX(1.0593);transform-origin:right;">0,00</div>
<div class="a t" style="left:1637.38px;top:775.00px;font-size:12.7px;line-height:12.7px;color:#1a1a1a;transform:scaleX(1.0593);transform-origin:right;">0,00</div>
<div class="a t" style="left:1785.38px;top:775.00px;font-size:12.7px;line-height:12.7px;color:#1a1a1a;transform:scaleX(1.0593);transform-origin:right;">0,00</div>
<div class="a" style="left:46px;top:376px;width:224px;height:27px;border:2px solid #2b5262;box-sizing:border-box"></div>
<div class="a" style="left:265px;top:398px;width:8px;height:8px;border-radius:50%;background:#2b5262;border:1.5px solid #fff;box-sizing:border-box"></div>
</div>
<div class="a" style="left:1856px;top:346px;width:23px;height:441px;background:#f9f9f9;"></div>
<svg class="a" style="left:1860px;top:352px" width="16" height="12"><path d="M7.5 1 L14.5 10.5 Q14.8 11 14 11 L1 11 Q0.3 11 0.6 10.4 Z" fill="#8a8a8a"/></svg>
<div class="a" style="left:1861px;top:373px;width:13px;height:25px;background:#8c8c8c;border-radius:6.5px;"></div>
<svg class="a" style="left:1860px;top:769px" width="16" height="12"><path d="M7.5 11 L14.5 1.5 Q14.8 1 14 1 L1 1 Q0.3 1 0.6 1.6 Z" fill="#8a8a8a"/></svg>
<div class="a" style="left:1879px;top:301px;width:1px;height:489px;background:#dedede;"></div>
<div class="a" style="left:14px;top:787px;width:1865px;height:3px;background:#fcfcfc;"></div>
</body></html>
